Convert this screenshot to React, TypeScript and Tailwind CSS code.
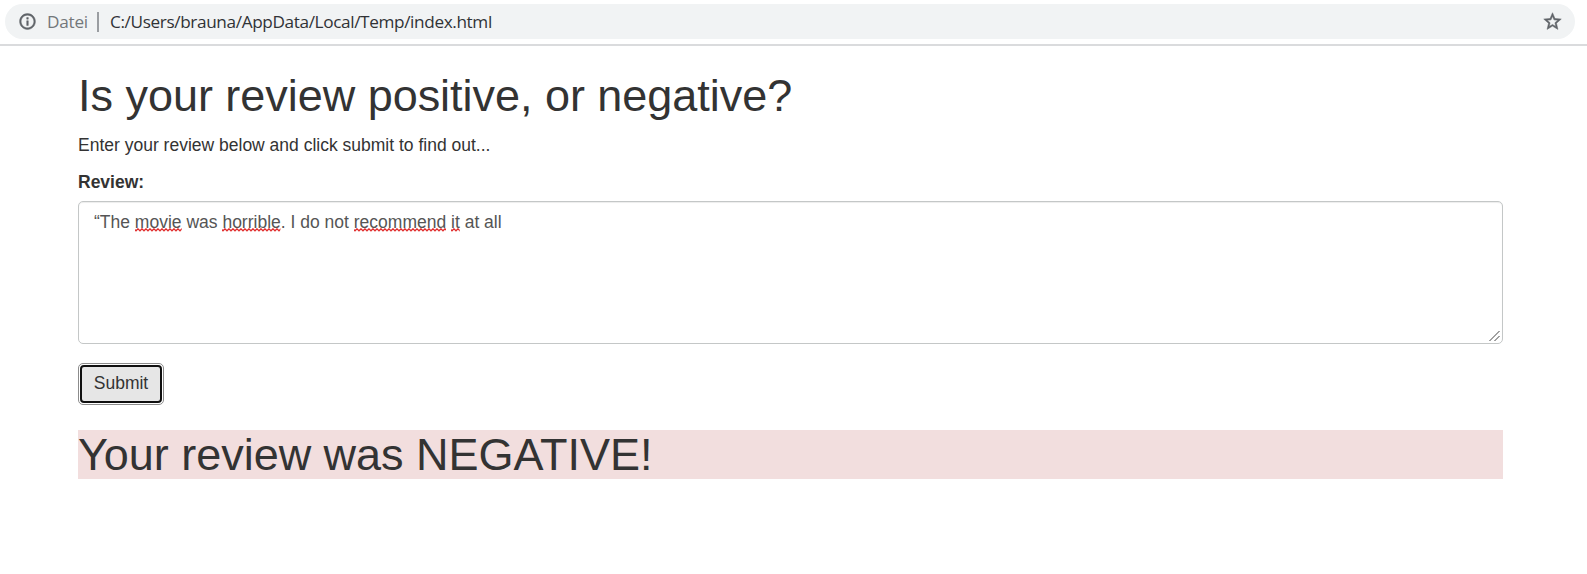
import type { ReactNode } from "react";

function Misspelled({ id, children }: { id: string; children: ReactNode }) {
  return (
    <span className="relative inline-block">
      {children}
      <svg className="absolute left-0 top-[18px] h-[4px] w-full" aria-hidden="true">
        <defs>
          <pattern id={id} width="4" height="4" patternUnits="userSpaceOnUse">
            <path d="M-1 0.5 L1 2.5 L3 0.5 L5 2.5" transform="translate(0 0.3)" fill="none" stroke="#e02a2a" strokeWidth="1.3" />
          </pattern>
        </defs>
        <rect width="100%" height="4" fill={`url(#${id})`} />
      </svg>
    </span>
  );
}

function AddressBar() {
  return (
    <header className="h-[46px] border-b-2 border-[#dadbdd] px-[5px] pt-1">
      <div className="flex h-[35px] w-[1570px] items-center rounded-full bg-[#f1f3f4] pl-[13px] pr-[12px] font-['Open_Sans',sans-serif] text-[17.2px] leading-[35px]">
        <svg className="size-[19px] shrink-0" viewBox="0 0 24 24" fill="#5f6368" stroke="#5f6368" strokeWidth="0.6">
          <path d="M11 17h2v-6h-2v6zm1-15C6.48 2 2 6.48 2 12s4.48 10 10 10 10-4.480 10-10S17.520 2 12 2zm0 18c-4.410 0-8-3.590-8-8s3.590-8 8-8 8 3.590 8 8-3.590 8-8 8zM11 9h2V7h-2v2z" />
        </svg>
        <span className="ml-[10px] w-[41px] whitespace-nowrap tracking-[-0.25px] text-[#73777b]">Datei</span>
        <span className="ml-[9px] h-[20px] w-[2px] bg-[#9a9da1]" />
        <span className="ml-[11px] whitespace-nowrap tracking-[-0.37px] text-[#303236]">C:/Users/brauna/AppData/Local/Temp/index.html</span>
        <svg className="ml-auto size-[21px] shrink-0" viewBox="0 0 24 24" fill="#5f6368" stroke="#5f6368" strokeWidth="0.6">
          <path d="M22 9.240l-7.190-.62L12 2 9.190 8.630 2 9.240l5.460 4.730L5.820 21 12 17.270 18.180 21l-1.630-7.030L22 9.240zM12 15.400l-3.760 2.270 1-4.280-3.320-2.880 4.380-.38L12 6.100l1.710 4.040 4.380.38-3.320 2.880 1 4.280L12 15.400z" />
        </svg>
      </div>
    </header>
  );
}

export default function App() {
  return (
    <div className="h-[574px] overflow-hidden bg-white font-['Liberation_Sans',Arial,sans-serif] text-[17.5px] leading-[25px] text-[#333333]">
      <AddressBar />
      <main className="ml-[78px] w-[1425px] pt-[25px]">
        <h1 className="text-[45px] leading-[49px] tracking-[-0.03px]">Is your review positive, or negative?</h1>
        <p className="mt-[13px]">Enter your review below and click submit to find out...</p>
        <div className="mt-[12px] font-bold">Review:</div>
        <div
          role="textbox"
          aria-multiline="true"
          className="relative mt-[6px] h-[143px] rounded-[5px] border border-[#c4c7c7] px-[15px] pt-[8px] text-[#555555] shadow-[inset_0_1px_1px_rgba(0,0,0,0.075)]"
        >
          “The <Misspelled id="w1">movie</Misspelled> was <Misspelled id="w2">horrible</Misspelled>. I do not{" "}
          <Misspelled id="w3">recommend</Misspelled> <Misspelled id="w4">it</Misspelled> at all
          <svg className="absolute bottom-[1px] right-[1px] size-[12px]" viewBox="0 0 12 12" stroke="#444" strokeWidth="1">
            <path d="M0.500 11 L10.500 1 M5.500 11 L10.500 6" />
          </svg>
        </div>
        <button className="mt-[19px] flex h-[42px] w-[86px] items-center justify-center rounded-[5px] border border-[#8c8c8c] bg-white p-px">
          <span className="flex size-full items-center justify-center rounded-[4px] border-2 border-[#101010] bg-[#e6e6e6] pb-[2px]">Submit</span>
        </button>
        <h1 className="mt-[25px] bg-[#f2dede] text-[45px] leading-[49px] tracking-[-0.03px]">Your review was NEGATIVE!</h1>
      </main>
    </div>
  );
}
